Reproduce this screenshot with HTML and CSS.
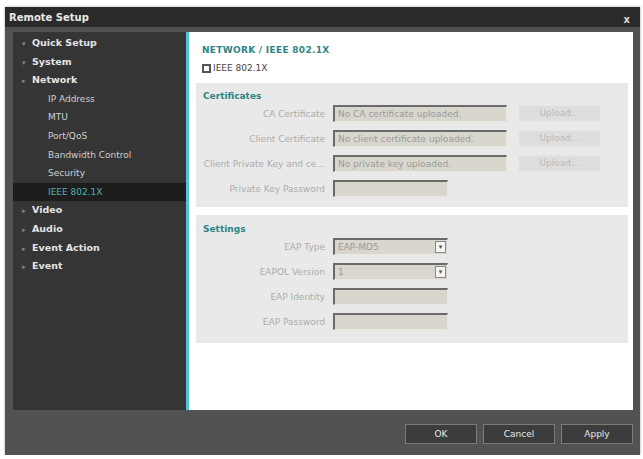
FILE: index.html
```html
<!DOCTYPE html>
<html lang="en">
<head>
    <meta charset="UTF-8">
    <title>Remote Setup</title>
    <link rel="stylesheet" href="styles.css">
</head>
<body>
    <div class="window">
        <div class="titlebar">
            <span class="title">Remote Setup</span>
            <span class="close">x</span>
        </div>

        <div class="main">
            <!-- Left menu -->
            <ul class="menu">
                <li class="group"><span class="arrow">&#9662;</span>Quick Setup</li>
                <li class="group"><span class="arrow">&#9662;</span>System</li>
                <li class="group"><span class="arrow">&#9656;</span>Network</li>
                <li class="sub">IP Address</li>
                <li class="sub">MTU</li>
                <li class="sub">Port/QoS</li>
                <li class="sub">Bandwidth Control</li>
                <li class="sub">Security</li>
                <li class="sub active">IEEE 802.1X</li>
                <li class="group"><span class="arrow">&#9656;</span>Video</li>
                <li class="group"><span class="arrow">&#9656;</span>Audio</li>
                <li class="group"><span class="arrow">&#9656;</span>Event Action</li>
                <li class="group"><span class="arrow">&#9656;</span>Event</li>
            </ul>

            <!-- Settings page -->
            <div class="content">
                <h1 class="page-title">NETWORK / IEEE 802.1X</h1>
                <label class="check"><span class="box"></span>IEEE 802.1X</label>

                <div class="section">
                    <h2>Certificates</h2>
                    <div class="row">
                        <span class="label">CA Certificate</span>
                        <span class="field wide">No CA certificate uploaded.</span>
                        <span class="upload">Upload...</span>
                    </div>
                    <div class="row">
                        <span class="label">Client Certificate</span>
                        <span class="field wide">No client certificate uploaded.</span>
                        <span class="upload">Upload...</span>
                    </div>
                    <div class="row">
                        <span class="label">Client Private Key and ce...</span>
                        <span class="field wide">No private key uploaded.</span>
                        <span class="upload">Upload...</span>
                    </div>
                    <div class="row">
                        <span class="label">Private Key Password</span>
                        <span class="field"></span>
                    </div>
                </div>

                <div class="section settings">
                    <h2>Settings</h2>
                    <div class="row">
                        <span class="label">EAP Type</span>
                        <span class="field select">EAP-MD5<span class="drop">&#9662;</span></span>
                    </div>
                    <div class="row">
                        <span class="label">EAPOL Version</span>
                        <span class="field select">1<span class="drop">&#9662;</span></span>
                    </div>
                    <div class="row">
                        <span class="label">EAP Identity</span>
                        <span class="field"></span>
                    </div>
                    <div class="row">
                        <span class="label">EAP Password</span>
                        <span class="field"></span>
                    </div>
                </div>
            </div>
        </div>

        <div class="footer">
            <button>OK</button>
            <button>Cancel</button>
            <button>Apply</button>
        </div>
    </div>
</body>
</html>
```

FILE: styles.css
```css
body {
    margin: 0;
    background: #fff;
    font-family: "DejaVu Sans", Verdana, sans-serif;
    font-size: 9px;
}

.window {
    margin: 7px 3px 0 5px;
    width: 635px;
    height: 448px;
    background: #525252;
    display: flex;
    flex-direction: column;
    box-shadow: 0 0 2px rgba(0, 0, 0, 0.4);
}

.titlebar {
    height: 20px;
    background: #2a2a2a;
    display: flex;
    align-items: center;
    justify-content: space-between;
    padding: 0 10px 0 4px;
}

.title {
    color: #e8e8e8;
    font-weight: bold;
    font-size: 10px;
}

.close {
    color: #ddd;
    font-weight: bold;
    font-size: 10px;
    margin-top: 4px;
}

.main {
    display: flex;
    height: 378px;
    margin: 5px 7px 0 8px;
}

/* Menu */
.menu {
    list-style: none;
    margin: 0;
    padding: 2px 0 0;
    width: 173px;
    background: #353535;
}

.menu li {
    height: 18.6px;
    line-height: 18.6px;
    color: #e4e4e4;
    white-space: nowrap;
}

.menu .group {
    font-weight: bold;
    padding-left: 9px;
    font-size: 9.5px;
}

.menu .arrow {
    display: inline-block;
    width: 10px;
    color: #888;
    font-size: 7px;
    font-weight: normal;
}

.menu .sub {
    padding-left: 35px;
    color: #d0d0d0;
}

.menu .active {
    background: #1d1d1d;
    color: #4fb3b3;
}

/* Content */
.content {
    flex: 1;
    background: #fff;
    border-left: 3px solid #4fc6cf;
    padding: 6px 5px 0 7px;
}

.page-title {
    margin: 7px 0 8px 6px;
    font-size: 9px;
    font-weight: bold;
    color: #2b8585;
    letter-spacing: 0.3px;
}

.check {
    display: flex;
    align-items: center;
    margin-left: 6px;
    color: #444;
    font-size: 9px;
}

.check .box {
    box-sizing: border-box;
    width: 9px;
    height: 9px;
    border: 2px solid #555;
    margin-right: 2px;
}

.section {
    background: #e9e9e9;
    margin-top: 10px;
    padding: 8px 0 10px 7px;
}

.section.settings {
    margin-top: 8px;
    padding: 9px 0 13px 7px;
}

.section h2 {
    margin: 0 0 4px;
    font-size: 9px;
    font-weight: bold;
    color: #2b8585;
}

.row {
    display: flex;
    align-items: center;
    height: 17px;
    margin-bottom: 8px;
}

.row:last-child {
    margin-bottom: 0;
}

.label {
    width: 122px;
    text-align: right;
    color: #acacac;
    margin-right: 8px;
    white-space: nowrap;
    overflow: hidden;
}

.field {
    box-sizing: border-box;
    width: 115px;
    height: 17px;
    background: #d9d7cd;
    border-top: 2px solid #6a6a6a;
    border-left: 2px solid #6a6a6a;
    border-right: 1px solid #e8e8e0;
    border-bottom: 1px solid #e8e8e0;
    color: #9a9a9a;
    padding-left: 3px;
    line-height: 14px;
    position: relative;
}

.field.wide {
    width: 174px;
}

.drop {
    position: absolute;
    right: 1px;
    top: 1px;
    width: 11px;
    height: 12px;
    background: #f4f4f4;
    border: 1px solid #888;
    box-sizing: border-box;
    font-size: 7px;
    line-height: 10px;
    text-align: center;
    color: #555;
}

.upload {
    box-sizing: border-box;
    width: 83px;
    height: 17px;
    margin-left: 11px;
    background: #dedede;
    border: 1px solid #e6e6e6;
    color: #b8b8b8;
    text-align: center;
    line-height: 15px;
}

/* Footer */
.footer {
    flex: 1;
    display: flex;
    justify-content: flex-end;
    align-items: flex-start;
    gap: 6px;
    padding: 14px 7px 0 0;
}

.footer button {
    width: 72px;
    height: 20px;
    background: #3c3c3c;
    border: 1px solid #7a7a7a;
    color: #e8e8e8;
    font-family: inherit;
    font-size: 9px;
    padding: 0;
}
```
